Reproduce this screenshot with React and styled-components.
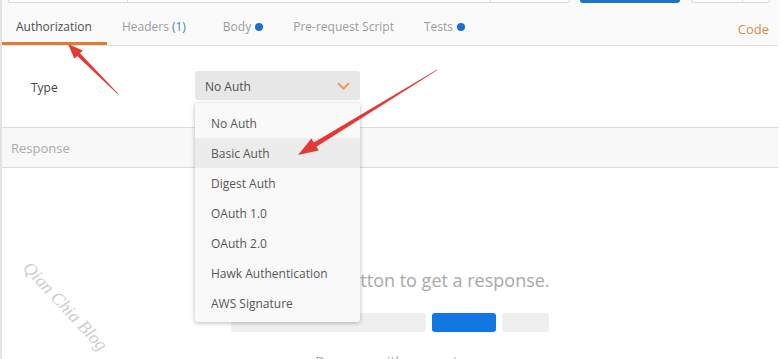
import React from "react";
import styled, { createGlobalStyle } from "styled-components";

const Global = createGlobalStyle`
  html, body { margin: 0; padding: 0; background: #ffffff; }
  body { font-family: "Open Sans", "Noto Sans", sans-serif; }
  * { box-sizing: border-box; }
`;

const Page = styled.div`
  position: relative;
  width: 781px;
  height: 359px;
  overflow: hidden;
  background: #ffffff;
`;

const Frame = styled.div`
  width: 778px;
  border-left: 2px solid #e3e3e3;
  display: flex;
  flex-direction: column;
  & > * { flex-shrink: 0; }
`;

const TopStrip = styled.div`
  height: 3px;
  background: #f9f9f9;
  display: flex;
  align-items: flex-end;
  overflow: hidden;
  padding-left: 6px;
`;

const FieldGroup = styled.div`
  display: flex;
  height: 20px;
  width: ${(p) => p.$w}px;
  margin-right: ${(p) => p.$mr || 0}px;
  border: 1px solid #d9d9d9;
  border-top: none;
  border-radius: 0 0 3px 3px;
  background: #ffffff;
`;

const FieldPart = styled.div`
  width: ${(p) => (p.$w ? `${p.$w}px` : "auto")};
  flex: ${(p) => (p.$w ? "none" : "1")};
  border-right: ${(p) => (p.$last ? "none" : "1px solid #dedede")};
`;

const SendButton = styled.div`
  width: 100px;
  height: 20px;
  margin-right: 11px;
  background: #1b74c9;
  border-radius: 0 0 3px 3px;
`;

const TabBar = styled.div`
  height: 43px;
  background: #fafafa;
  border-bottom: 1px solid #e2e2e2;
  display: flex;
  align-items: stretch;
`;

const Tab = styled.div`
  height: 42px;
  padding: 8px ${(p) => p.$pr || 15}px 0 ${(p) => p.$pl || 15}px;
  display: flex;
  align-items: center;
  gap: 4px;
  font-size: 12px;
  color: ${(p) => (p.$active ? "#4f4f4f" : "#9c9c9c")};
  border-bottom: 3px solid ${(p) => (p.$active ? "#e07d33" : "transparent")};
  white-space: nowrap;
`;

const Count = styled.span`
  color: #3f7fbf;
  margin-left: 3px;
`;

const Dot = styled.span`
  width: 8px;
  height: 8px;
  border-radius: 50%;
  background: #1a70cc;
  display: inline-block;
  margin-top: 1px;
`;

const Spacer = styled.div`
  flex: 1;
`;

const CodeLink = styled.div`
  display: flex;
  align-items: center;
  padding: 10px 9px 0 0;
  font-size: 13px;
  color: #dc8a45;
`;

const AuthSection = styled.div`
  height: 81px;
  background: #ffffff;
  padding: 25px 0 0 29px;
  display: flex;
  align-items: flex-start;
`;

const FieldLabel = styled.div`
  width: 164px;
  height: 29px;
  padding-top: 3px;
  display: flex;
  align-items: center;
  font-size: 12px;
  color: #474747;
`;

const SelectWrap = styled.div`
  position: relative;
  width: 165px;
`;

const SelectBox = styled.div`
  height: 29px;
  border-radius: 3px;
  background: #e7e7e7;
  display: flex;
  align-items: center;
  justify-content: space-between;
  padding: 1px 10px 0 10px;
  font-size: 12px;
  color: #525252;
`;

const Menu = styled.div`
  position: absolute;
  z-index: 5;
  top: 32px;
  left: 0;
  width: 165px;
  padding: 5px 0 4px;
  background: #f9f9f9;
  border-radius: 3px;
  box-shadow: 0 1px 4px rgba(0, 0, 0, 0.28);
`;

const MenuItem = styled.div`
  height: 30px;
  display: flex;
  align-items: center;
  padding-left: 16px;
  font-size: 12px;
  color: #575757;
  background: ${(p) => (p.$hover ? "#ececec" : "transparent")};
`;

const ResponseBar = styled.div`
  height: 41px;
  background: #f8f8f8;
  border-top: 1px solid #dcdcdc;
  border-bottom: 1px solid #dcdcdc;
  display: flex;
  align-items: center;
  padding-left: 9px;
  font-size: 13px;
  color: #ababab;
`;

const Empty = styled.div`
  display: flex;
  flex-direction: column;
  align-items: center;
  padding-top: 100px;
`;

const EmptyTitle = styled.div`
  font-size: 18px;
  line-height: 24px;
  color: #a9a9a9;
  white-space: nowrap;
`;

const MockBar = styled.div`
  margin-top: 21px;
  display: flex;
  gap: 6px;
`;

const MockPart = styled.div`
  width: ${(p) => p.$w}px;
  height: 19px;
  border-radius: 3px;
  background: ${(p) => (p.$blue ? "#1177e3" : "#efefef")};
`;

const MoreTitle = styled.div`
  margin-top: 20px;
  font-size: 14px;
  line-height: 20px;
  color: #a9a9a9;
  white-space: nowrap;
`;

const Watermark = styled.div`
  position: absolute;
  left: 8px;
  top: 296px;
  transform: rotate(47deg);
  transform-origin: center;
  font-family: "Liberation Serif", "DejaVu Serif", serif;
  font-style: italic;
  font-size: 18px;
  color: #cdcdcd;
  white-space: nowrap;
  pointer-events: none;
`;

const Annotations = styled.svg`
  position: absolute;
  left: 0;
  top: 0;
  width: 781px;
  height: 359px;
  pointer-events: none;
  z-index: 10;
`;

const Chevron = () => (
  <svg width="13" height="8" viewBox="0 0 13 8">
    <path d="M1 1.2 L6.5 6.5 L12 1.2" fill="none" stroke="#ee9a5a" strokeWidth="2" />
  </svg>
);

const items = [
  "No Auth",
  "Basic Auth",
  "Digest Auth",
  "OAuth 1.0",
  "OAuth 2.0",
  "Hawk Authentication",
  "AWS Signature",
];

export default function App() {
  return (
    <>
      <Global />
      <Page>
        <Frame>
          <TopStrip>
            <FieldGroup $w={562} $mr={10}>
              <FieldPart $w={119} />
              <FieldPart $w={363} />
              <FieldPart $last />
            </FieldGroup>
            <SendButton />
            <FieldGroup $w={79}>
              <FieldPart $w={51} />
              <FieldPart $last />
            </FieldGroup>
          </TopStrip>
          <TabBar>
            <Tab $active $pl={14}>Authorization</Tab>
            <Tab $pr={22}>
              <span>
                Headers<Count>(1)</Count>
              </span>
            </Tab>
            <Tab>
              Body <Dot />
            </Tab>
            <Tab>Pre-request Script</Tab>
            <Tab>
              Tests <Dot />
            </Tab>
            <Spacer />
            <CodeLink>Code</CodeLink>
          </TabBar>
          <AuthSection>
            <FieldLabel>Type</FieldLabel>
            <SelectWrap>
              <SelectBox>
                <span>No Auth</span>
                <Chevron />
              </SelectBox>
              <Menu>
                {items.map((it) => (
                  <MenuItem key={it} $hover={it === "Basic Auth"}>
                    {it}
                  </MenuItem>
                ))}
              </Menu>
            </SelectWrap>
          </AuthSection>
          <ResponseBar>Response</ResponseBar>
          <Empty>
            <EmptyTitle>Hit the Send button to get a response.</EmptyTitle>
            <MockBar>
              <MockPart $w={195} />
              <MockPart $w={64} $blue />
              <MockPart $w={47} />
            </MockBar>
            <MoreTitle>Do more with requests</MoreTitle>
          </Empty>
        </Frame>
        <Watermark>Qian Chia Blog</Watermark>
        <Annotations viewBox="0 0 781 359">
          <polygon
            points="68,44 82.8,50.4 80.0,53.2 118.3,93.7 117.7,94.3 77.2,56.0 74.4,58.8"
            fill="#e53a33"
          />
          <polygon
            points="298,155 311.4,138.6 313.8,142.5 436.8,69.7 437.2,70.3 316.4,146.7 318.7,150.6"
            fill="#e53a33"
          />
        </Annotations>
      </Page>
    </>
  );
}
